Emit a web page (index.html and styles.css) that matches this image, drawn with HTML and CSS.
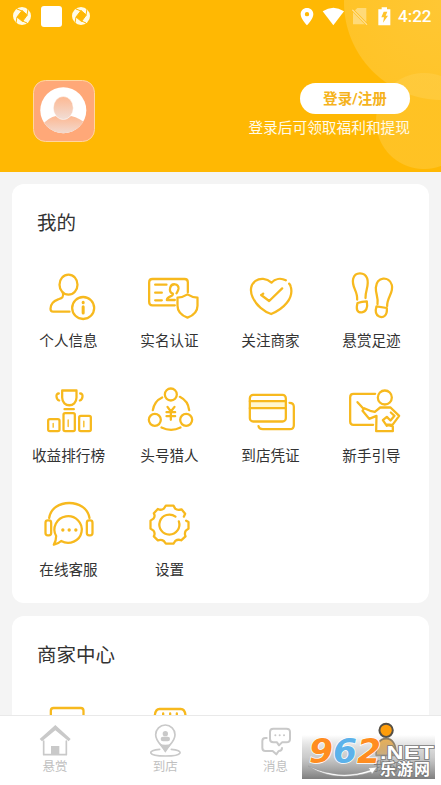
FILE: index.html
```html
<!DOCTYPE html>
<html lang="zh-CN">
<head>
<meta charset="utf-8">
<title>我的</title>
<link rel="stylesheet" href="styles.css">
</head>
<body>
<header class="hero">
  <div class="status">
    <div class="status-left">
      <svg class="swirl" viewBox="0 0 18 18"><circle cx="9" cy="9" r="9"/><path d="M9 3.5 14.3 8 9.5 14.5 4 10Z"/><path d="M9 4 4 2M14 8l1-6M9.5 14 14 16M4 10 3 16"/></svg>
      <span class="square"></span>
      <svg class="swirl" viewBox="0 0 18 18"><circle cx="9" cy="9" r="9"/><path d="M9 3.5 14.3 8 9.5 14.5 4 10Z"/><path d="M9 4 4 2M14 8l1-6M9.5 14 14 16M4 10 3 16"/></svg>
    </div>
    <svg class="status-icons" viewBox="236 18 276 57">
      <path fill="#fff" fill-rule="evenodd" d="M257 21c-11 0-19 8-19 19 0 14 19 33 19 33s19-19 19-33c0-11-8-19-19-19Zm0 12a6.500 6.500 0 1 1 0 13 6.500 6.500 0 0 1 0-13Z"/>
      <path fill="#fff" d="M304 31q32-21 64 0L336 73Z"/>
      <path fill="#ffda78" d="M395 34l13-13h27v49h-40Z"/><path stroke="#ffbd17" stroke-width="8" d="M393 26l44 45"/><path stroke="#ffdf91" stroke-width="4" d="M393 26l44 45"/>
      <path fill="#fff" d="M471 25h10v-6h16v6h10v48h-36Z"/><path fill="#ffc42b" d="M487 32h11l-5 12h7l-15 21 3-16h-8Z"/>
    </svg>
    <span class="clock">4:22</span>
  </div>
  <svg class="avatar" viewBox="0 0 62 62">
    <defs><linearGradient id="skin" x2="0" y2="1"><stop stop-color="#fdb892"/><stop offset="1" stop-color="#f1ddd5"/></linearGradient><clipPath id="face"><circle cx="30.300" cy="30.200" r="23"/></clipPath></defs>
    <rect x=".5" y=".5" width="61" height="61" rx="12" fill="#ffa878" stroke="#ffd6a0"/>
    <circle cx="30.300" cy="30.200" r="23" fill="#fff"/>
    <g clip-path="url(#face)" fill="url(#skin)"><path d="M8 46q8-9 15-10 7 6 15 0 10 2 17 10v9H8Z"/><ellipse cx="30.300" cy="28" rx="10" ry="11.500" stroke="#fff" stroke-width=".5"/></g>
  </svg>
  <div class="login"><button class="login-btn">登录/注册</button><p>登录后可领取福利和提现</p></div>
</header>
<main>
  <section class="card">
    <h2>我的</h2>
    <div class="grid">
      <div class="item"><svg viewBox="55.500 21 180 180"><path d="M127 98c4 14-3 16-14 20-16 6-23 15-23 28 0 6 2 9 8 9h49"/><ellipse cx="144" cy="74" rx="27" ry="30"/><circle cx="188" cy="144" r="33"/><path stroke-width="9" d="M188 140v19M188 127v1"/></svg><span>个人信息</span></div>
      <div class="item"><svg viewBox="58.500 21 180 180"><path d="M163 136H96q-10 0-10-10V67q0-10 10-10h96q10 0 10 10v30M104 74h34M104 98h20M104 121h20M157 101c-8-3-10-10-8-18 4-15 26-13 25 3-1 7-4 10-6 14M157 101c2 10-17 6-18 19h24"/><path d="M201 103c-9 6-18 9-30 10v24c0 18 12 29 30 36 18-7 30-18 30-36v-24c-12-1-21-4-30-10Z"/></svg><span>实名认证</span></div>
      <div class="item"><svg viewBox="61.500 21 180 180"><path d="M196 61c-15-8-32-5-43 7-31-28-78-1-56 45 10 23 34 42 55 49 38-16 68-47 59-81-1-5-3-8-5-10M122 105l24 18 39-38M123 106l5-5"/></svg><span>关注商家</span></div>
      <div class="item"><svg viewBox="364.500 21 180 180"><path d="M410 119c2-26-18-39-12-63 6-22 35-20 42-1 7 21-6 37-5 59M471 132c3-20-6-31-5-49 3-34 40-35 48-8 6 23-15 37-14 63M411 129q13-4 28-5 5 30-15 33-21 1-13-28ZM468 139l31 5c2 22-10 32-24 25-11-6-11-17-7-30Z"/></svg><span>悬赏足迹</span></div>
      <div class="item"><svg viewBox="55.500 19.500 180 180"><path d="M125 45h43v21c0 31-43 31-43 0ZM115 54c-11 0-8 18 1 21M179 54c11 0 8 18-1 21M132 101h28"/><rect x="83" y="131" width="34" height="36" rx="5"/><rect x="129" y="113" width="34" height="54" rx="5"/><rect x="176" y="121" width="35" height="46" rx="5"/><path stroke-width="4" d="M98 144v11M143 133v20M190 137v17"/></svg><span>收益排行榜</span></div>
      <div class="item"><svg viewBox="358.500 19.500 180 180"><circle cx="451" cy="57" r="18"/><circle cx="403" cy="133" r="18"/><circle cx="497" cy="133" r="18"/><path d="M425 66c-15 7-25 20-28 38M478 64c16 8 26 22 28 40M423 156q29 14 57 0M441 94l10 14 11-14M451 108v25M438 110h26M438 122h26"/></svg><span>头号猎人</span></div>
      <div class="item"><svg viewBox="61.500 19.500 180 180"><path fill="#fff7cf" stroke="none" d="M88 77h108v22H88Z"/><rect x="88" y="58" width="108" height="80" rx="10"/><path d="M88 77h108M88 98h108M207 82c8 0 13 3 13 12v55q0 12-12 12h-81c-8 0-12-3-13-9"/></svg><span>到店凭证</span></div>
      <div class="item"><svg viewBox="364.500 19.500 180 180"><path d="M464 55h-65q-10 0-10 10v73q0 10 10 10h59"/><circle cx="493" cy="66" r="21"/><path d="M411 80l18 20M431 98l-5 8 20 24 22-9-1 46h50v-14l-21-6 20 1 20-27-26-25h-31l-16 13-14-3ZM511 111l11 10-12 14-11-11-12 10 12 17"/></svg><span>新手引导</span></div>
      <div class="item"><svg viewBox="55.500 18 180 180"><path d="M86 84c8-60 112-60 121 0"/><rect x="75" y="91" width="17" height="45" rx="7"/><rect x="199" y="91" width="17" height="45" rx="7"/><path d="M107 138a41 40 0 1 1 15 15q-8 8-22 11 7-12 7-26Z"/><path stroke-width="10" d="M127 120h.1M146 120h.1M166 120h.1"/></svg><span>在线客服</span></div>
      <div class="item"><svg viewBox="358.500 18 180 180"><path d="M490 80l4-9-11-13q-12 4-19-2l-5-9h-23l-6 9q-8 6-18 1l-12 13q5 8-1 16l-9 6v24l9 6q6 8 1 17l12 12q10-4 18 2l6 8h23l6-9q8-5 17-1l13-12q-4-9 1-17l8-6v-20l-7-4"/><path d="M475 94a30 30 0 1 1-10-14"/></svg><span>设置</span></div>
    </div>
  </section>
  <section class="card">
    <h2>商家中心</h2>
    <div class="grid">
      <div class="item"><svg viewBox="115.500 27 180 180"><rect x="151" y="54" width="98" height="90" rx="8"/></svg></div>
      <div class="item"><svg viewBox="418.500 27 180 180"><path d="M463 76q2-19 14-19h64q12 0 14 19M488 70v4M509 70v4M529 70v4"/></svg></div>
    </div>
  </section>
</main>
<nav>
  <div class="tab"><svg viewBox="105 96 120 108"><path fill="#c9c9c9" stroke="none" d="M119 147l47-42 46 42-6 7-40-33-40 33Z"/><path stroke-width="5" d="M131 153v41h68v-41"/><path fill="#c9c9c9" stroke="none" d="M153 168h25v27h-25Z"/></svg><span>悬赏</span></div>
  <div class="tab"><svg viewBox="436 96 120 108"><path stroke-width="5" d="M497 183c-9-18-29-27-29-49a29 29 0 0 1 58 0c0 22-20 31-29 49Z"/><path fill="#c9c9c9" stroke="none" d="M478 160q19 9 38 0l-19 28Z"/><circle cx="497" cy="131" r="8" fill="#c9c9c9" stroke="none"/><rect x="483" y="140" width="28" height="14" rx="7" fill="#c9c9c9" stroke="none"/><path stroke-width="5" d="M480 178c-38 3-38 20 17 20s56-17 18-20"/></svg><span>到店</span></div>
  <div class="tab"><svg viewBox="107 96 120 108"><path stroke-width="6" d="M159 116h39q11 0 11 10v21q0 10-11 10h-13l-9 9-6-9h-11q-10 0-10-10v-21q0-10 10-10ZM139 144h-4q-9 0-9 9v20q0 10 9 10h22l11 10 7-10q10 0 10-9"/><path stroke-width="6" d="M165 136h.1M178 136h.1M191 136h.1"/></svg><span>消息</span></div>
  <div class="tab active"><svg viewBox="437.700 96 120 108"><circle cx="498" cy="121" r="20" fill="#ff9d0a" stroke="#555047" stroke-width="6"/><path fill="#f4b553" stroke="#8d7a5c" stroke-width="5" d="M468 196c0-26 5-50 30-50s30 24 30 50Z"/></svg><span>我的</span></div>
</nav>
<svg class="watermark" viewBox="0 0 133 46">
  <defs><linearGradient id="haze" x2="0" y2="1"><stop stop-color="#888" stop-opacity="0"/><stop offset=".5" stop-color="#aaa" stop-opacity=".6"/><stop offset="1" stop-color="#777" stop-opacity=".95"/></linearGradient></defs>
  <path fill="url(#haze)" d="M0 2h133v44H0Z"/>
  <path fill="#fff" stroke="#999" stroke-width=".5" d="M6 33q32 15 62 4l-2-2 9-1-5 7-1-2Q33 50 6 33Z"/>
  <g class="digits"><text x="7" y="30" fill="#ff8d20" textLength="24" lengthAdjust="spacingAndGlyphs">9</text><text x="31" y="30" fill="#5cb2ea" textLength="24" lengthAdjust="spacingAndGlyphs">6</text><text x="55" y="30" fill="#ff8d20" textLength="24" lengthAdjust="spacingAndGlyphs">2</text></g>
  <text class="net" x="78" y="25.500" textLength="54" lengthAdjust="spacingAndGlyphs">.NET</text>
  <text class="site" x="78" y="42" textLength="50">乐游网</text>
</svg>
</body>
</html>
```
FILE: styles.css
```css
* { box-sizing: border-box; }
body {
  margin: 0;
  height: 785px;
  overflow: hidden;
  position: relative;
  display: flex;
  flex-direction: column;
  background: #f4f4f4;
  color: #333;
  font-family: Roboto, "Noto Sans CJK SC", sans-serif;
}
.hero {
  flex: none;
  height: 172px;
  display: grid;
  grid-template: 32px 1fr / 1fr auto;
  background:
    radial-gradient(circle at 424px 121px, rgba(255, 210, 85, .4) 47.5px, transparent 48.5px),
    radial-gradient(circle at 442px 2px, rgba(255, 214, 100, .5) 0, rgba(255, 205, 70, .55) 97.5px, transparent 98.5px),
    #ffb803;
}
.status {
  grid-column: 1 / 3;
  display: flex;
  align-items: center;
  padding: 0 9px 0 13px;
}
.status-left { display: flex; align-items: center; gap: 10px; flex: 1; }
.swirl { width: 18px; height: 18px; fill: #fffbe7; }
.swirl path { fill: #ffb803; stroke: #ffb803; stroke-width: 1; }
.square { width: 21px; height: 21px; border-radius: 3px; background: #fff; }
.status-icons { width: 92px; height: 19px; margin-right: 6px; fill: none; }
.clock { color: #fff; font-size: 17px; font-weight: 500; line-height: 32px; width: 34px; white-space: nowrap; }
.avatar { width: 62px; height: 62px; margin: 48px 0 0 33px; }
.login { padding: 51px 31px 0 0; display: flex; flex-direction: column; align-items: flex-end; }
.login-btn {
  width: 110px;
  height: 31px;
  border: 0;
  padding: 2px 0 0;
  border-radius: 16px;
  background: #fff;
  color: #f5b31c;
  font: 700 14.600px/29px Roboto, "Noto Sans CJK SC", sans-serif;
}
.login p { margin: 4px 0 0; font-size: 14.700px; line-height: 20px; color: #fffbea; }
main { flex: 1; min-height: 0; overflow: hidden; padding: 12px 12px 0; }
.card {
  height: 419px;
  margin-bottom: 13px;
  padding: 0 6px;
  border-radius: 12px;
  background: #fff;
}
.card h2 { margin: 0; padding: 26px 0 0 19px; height: 83px; font-size: 19.500px; font-weight: 400; line-height: 28px; }
.grid { display: grid; grid-template-columns: repeat(4, 101px); grid-auto-rows: 114.500px; }
.item { display: flex; flex-direction: column; align-items: center; }
.item svg { width: 60px; height: 60px; fill: none; stroke: #f7b91e; stroke-width: 6.800; stroke-linecap: round; stroke-linejoin: round; }
.item span { margin-top: 4px; font-size: 14.600px; line-height: 20px; white-space: nowrap; }
nav { flex: none; height: 70px; border-top: 1px solid #e9e9e9; background: #fff; display: grid; grid-template-columns: repeat(4, 1fr); }
.tab { display: flex; flex-direction: column; align-items: center; padding-top: 6px; color: #c0c0c0; }
.tab svg { width: 40px; height: 36px; fill: none; stroke: #c9c9c9; stroke-linecap: round; stroke-linejoin: round; }
.tab span { margin-top: 1px; font-size: 12.500px; line-height: 16px; }
.active { color: #333; }
.watermark { position: absolute; left: 302px; top: 733px; width: 133px; height: 46px; }
.digits { font: italic 700 33px "DejaVu Sans", sans-serif; stroke: #fff; stroke-width: 1.500px; paint-order: stroke; }
.net { font: 700 18px "Liberation Sans", sans-serif; fill: #fff; stroke: #777; stroke-width: 1.500px; paint-order: stroke; }
.site { font: 700 16px "Noto Sans CJK SC", sans-serif; fill: #fff; stroke: #777; stroke-width: 1.500px; paint-order: stroke; }
```
